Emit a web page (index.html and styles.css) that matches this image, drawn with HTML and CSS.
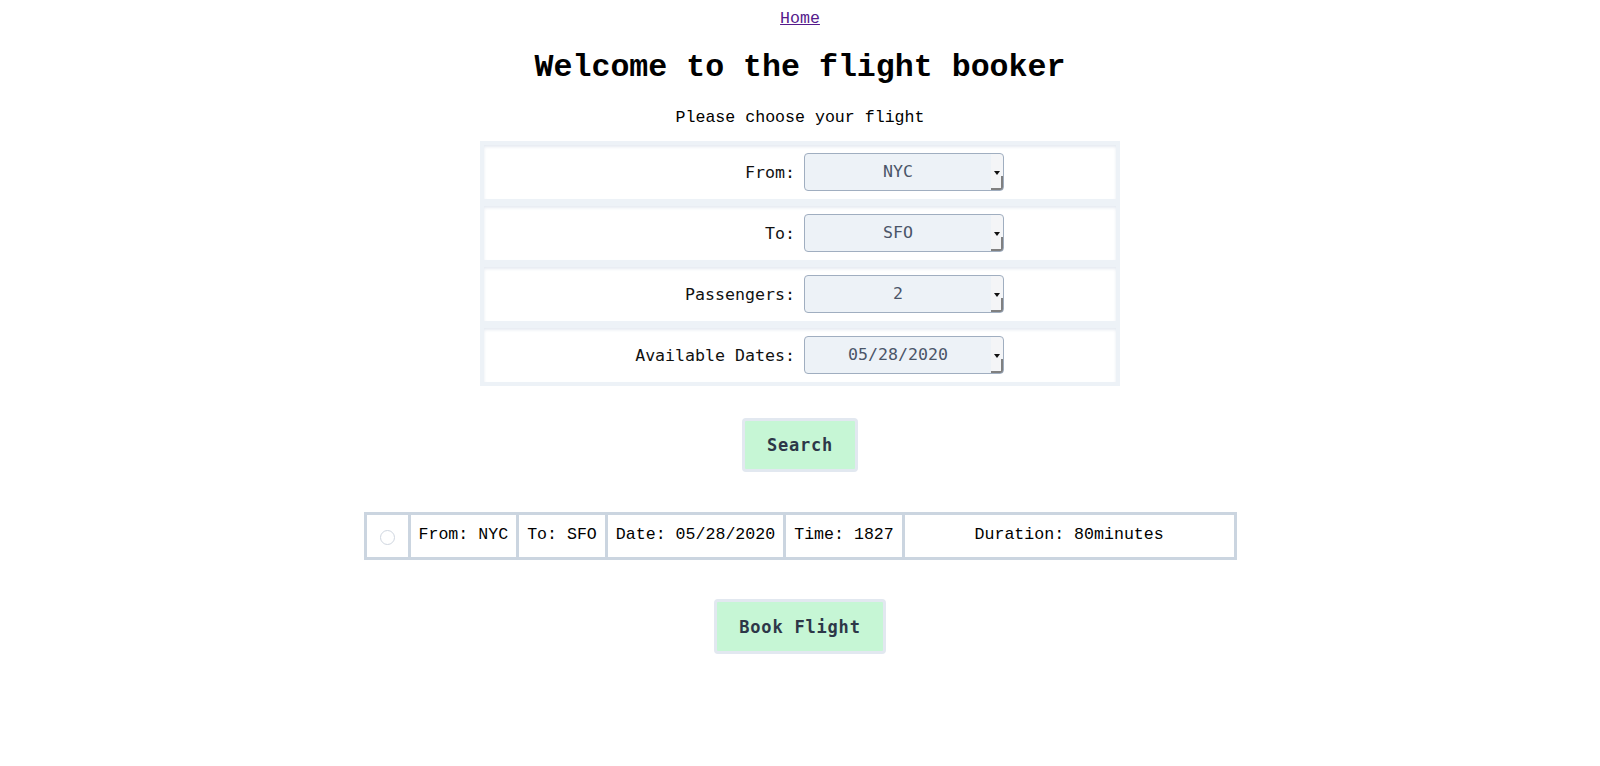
FILE: index.html
```html
<!DOCTYPE html>
<html lang="en">
<head>
<meta charset="utf-8">
<title>Flight booker</title>
<link rel="stylesheet" href="styles.css">
</head>
<body>
<nav class="nav"><a class="nav-link" href="#">Home</a></nav>
<h1 class="title">Welcome to the flight booker</h1>
<p class="subtitle">Please choose your flight</p>
<form class="booker">
  <div class="fields">
    <div class="field">
      <label class="field-label" for="from">From:</label>
      <div class="field-control">
        <select class="field-select" id="from"><option>NYC</option></select>
      </div>
    </div>
    <div class="field">
      <label class="field-label" for="to">To:</label>
      <div class="field-control">
        <select class="field-select" id="to"><option>SFO</option></select>
      </div>
    </div>
    <div class="field">
      <label class="field-label" for="pax">Passengers:</label>
      <div class="field-control">
        <select class="field-select" id="pax"><option>2</option></select>
      </div>
    </div>
    <div class="field">
      <label class="field-label" for="date">Available Dates:</label>
      <div class="field-control">
        <select class="field-select" id="date"><option>05/28/2020</option></select>
      </div>
    </div>
  </div>
  <div class="actions">
    <button type="button" class="btn btn-search">Search</button>
  </div>
  <table class="results">
    <tr>
      <td class="cell cell-fit cell-radio"><input type="radio" class="radio" name="flight"></td>
      <td class="cell cell-fit">From: NYC</td>
      <td class="cell cell-fit">To: SFO</td>
      <td class="cell cell-fit">Date: 05/28/2020</td>
      <td class="cell cell-fit">Time: 1827</td>
      <td class="cell cell-wide">Duration: 80minutes</td>
    </tr>
  </table>
  <div class="actions actions-book">
    <button type="button" class="btn btn-book">Book Flight</button>
  </div>
</form>
</body>
</html>
```

FILE: styles.css
```css
body {
  margin: 8px;
  font-family: "Liberation Mono", monospace;
  font-size: 16.6px;
  text-align: center;
  color: #000;
  background: #fff;
}

.nav {
  line-height: 20px;
  padding-top: 1px;
}

.nav-link {
  color: #551a8b;
}

.title {
  font-size: 31.6px;
  font-weight: bold;
  margin: 20px 0 22px;
  line-height: 37px;
}

.subtitle {
  margin: 16px 0 13px;
  line-height: 20px;
}

.booker {
  margin: 0;
}

.fields {
  width: 632px;
  margin: 0 auto;
  padding: 4px;
  background: #edf2f7;
  display: flex;
  flex-direction: column;
  gap: 7px;
}

.field {
  background: #fff;
  height: 54px;
  display: grid;
  grid-template-columns: 1fr 1fr;
  align-items: center;
  box-shadow: inset 0 2px 3px rgba(226, 232, 240, 0.9);
}

.field-label {
  text-align: right;
  padding-right: 5px;
  font-family: "DejaVu Sans Mono", monospace;
  font-size: 16.6px;
  color: #111;
}

.field-control {
  text-align: left;
  padding-left: 4px;
  display: flex;
}

.field-select {
  -webkit-appearance: none;
  appearance: none;
  width: 200px;
  height: 38px;
  margin: 0 0 1px;
  background-color: #edf2f7;
  background-image: url("data:image/svg+xml,%3Csvg xmlns='http://www.w3.org/2000/svg' width='12' height='36'%3E%3Crect width='12' height='36' fill='%23f4f5f7'/%3E%3Cpath d='M3 17h6l-3 4z' fill='%23111'/%3E%3Cpath d='M11 22v14M0 35h12' stroke='%23808080' stroke-width='2'/%3E%3C/svg%3E");
  background-repeat: no-repeat;
  background-position: right 0 top 0;
  background-size: 12px 36px;
  border: 1px solid #a0aec0;
  border-radius: 4px;
  font-family: "DejaVu Sans Mono", monospace;
  font-size: 16.6px;
  color: #4a5568;
  text-align: center;
  text-align-last: center;
  padding: 0 12px 0 0;
}

.actions {
  margin-top: 32px;
}

.btn {
  background: #c6f6d5;
  border: 3px solid #e2e8f0;
  border-radius: 4px;
  font-family: "DejaVu Sans Mono", monospace;
  font-weight: bold;
  font-size: 17px;
  color: #2d3748;
  letter-spacing: 0.8px;
  cursor: pointer;
}

.btn-search {
  width: 116px;
  height: 54px;
}

.btn-book {
  width: 172px;
  height: 55px;
}

.results {
  width: 873px;
  margin: 40px auto 0;
  border-collapse: collapse;
  border: 3px solid #cbd5e0;
}

.cell {
  border: 3px solid #cbd5e0;
  padding: 10px 8px 13px;
  line-height: 19px;
  white-space: nowrap;
  text-align: left;
}

.cell-fit {
  width: 1%;
}

.cell-radio {
  text-align: center;
  padding: 9px 13px 11px;
}

.cell-wide {
  text-align: center;
}

.radio {
  -webkit-appearance: none;
  appearance: none;
  display: block;
  margin: 4px 0 0;
  width: 15px;
  height: 15px;
  border: 1px solid #cfd6e0;
  border-radius: 50%;
  background: #fff;
}

.actions-book {
  margin-top: 39px;
}
```
